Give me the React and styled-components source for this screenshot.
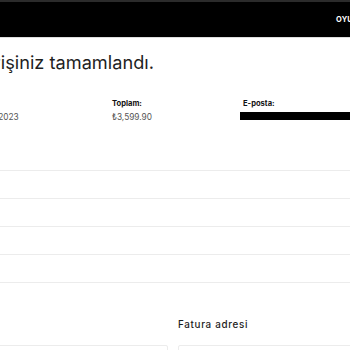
import styled, { createGlobalStyle } from "styled-components";

const GlobalStyle = createGlobalStyle`
  html, body {
    margin: 0;
    padding: 0;
    background: #ffffff;
    overflow: hidden;
  }
  body {
    font-family: "Inter", "Liberation Sans", sans-serif;
    color: #1a1a1a;
  }
`;

const Page = styled.div`
  width: 520px;
  margin-left: -56px;
`;

const Header = styled.header`
  height: 35px;
  background: #000;
  border-top: 2px solid #2b2b2b;
  border-bottom: 1px solid #dedede;
  display: flex;
  align-items: center;
  padding-left: 392px;
`;

const NavItem = styled.span`
  color: #fff;
  font-size: 7.5px;
  font-weight: 700;
  letter-spacing: 0.2px;
  text-transform: uppercase;
  white-space: nowrap;
`;

const Main = styled.main`
  padding-top: 12px;
`;

const Title = styled.h1`
  margin: 0 0 0 12px;
  font-size: 18.2px;
  font-weight: 400;
  line-height: 24px;
  color: #1f1f1f;
  white-space: nowrap;
`;

const Summary = styled.div`
  display: grid;
  grid-template-columns: 157px 131px 1fr;
  margin: 25px 0 0 11px;
`;

const Field = styled.div`
  display: flex;
  flex-direction: column;
  gap: 4px;
`;

const Label = styled.span`
  font-size: 7.6px;
  font-weight: 700;
  line-height: 9px;
  color: #111;
`;

const Value = styled.span`
  font-size: 8.3px;
  line-height: 10px;
  color: #555;
  white-space: nowrap;
`;

const Redacted = styled.span`
  display: block;
  height: 8px;
  width: 200px;
  margin-left: -3px;
  background: #000;
`;

const Items = styled.ul`
  list-style: none;
  margin: 48px 0 0;
  padding: 0;
  border-bottom: 1px solid #ececec;
`;

const ItemRow = styled.li`
  height: 27px;
  border-top: 1px solid #ececec;
`;

const Addresses = styled.section`
  display: grid;
  grid-template-columns: 224px 1fr;
  column-gap: 10px;
  margin-top: 36px;
`;

const AddressTitle = styled.h2`
  margin: 0 0 14px;
  font-size: 9.8px;
  font-weight: 500;
  letter-spacing: 0.7px;
  line-height: 12px;
  color: #1c1c1c;
  min-height: 12px;
`;

const AddressBox = styled.div`
  height: 60px;
  border: 1px solid #ececec;
  border-radius: 2px;
`;

export default function App() {
  return (
    <>
      <GlobalStyle />
      <Page>
        <Header>
          <NavItem>Oyuncaklar</NavItem>
        </Header>
        <Main>
          <Title>Siparişiniz tamamlandı.</Title>
          <Summary>
            <Field>
              <Label>Tarih:</Label>
              <Value>12 Haziran 2023</Value>
            </Field>
            <Field>
              <Label>Toplam:</Label>
              <Value>₺3,599.90</Value>
            </Field>
            <Field>
              <Label>E-posta:</Label>
              <Redacted />
            </Field>
          </Summary>
          <Items>
            <ItemRow />
            <ItemRow />
            <ItemRow />
            <ItemRow />
          </Items>
          <Addresses>
            <div>
              <AddressTitle />
              <AddressBox />
            </div>
            <div>
              <AddressTitle>Fatura adresi</AddressTitle>
              <AddressBox />
            </div>
          </Addresses>
        </Main>
      </Page>
    </>
  );
}
